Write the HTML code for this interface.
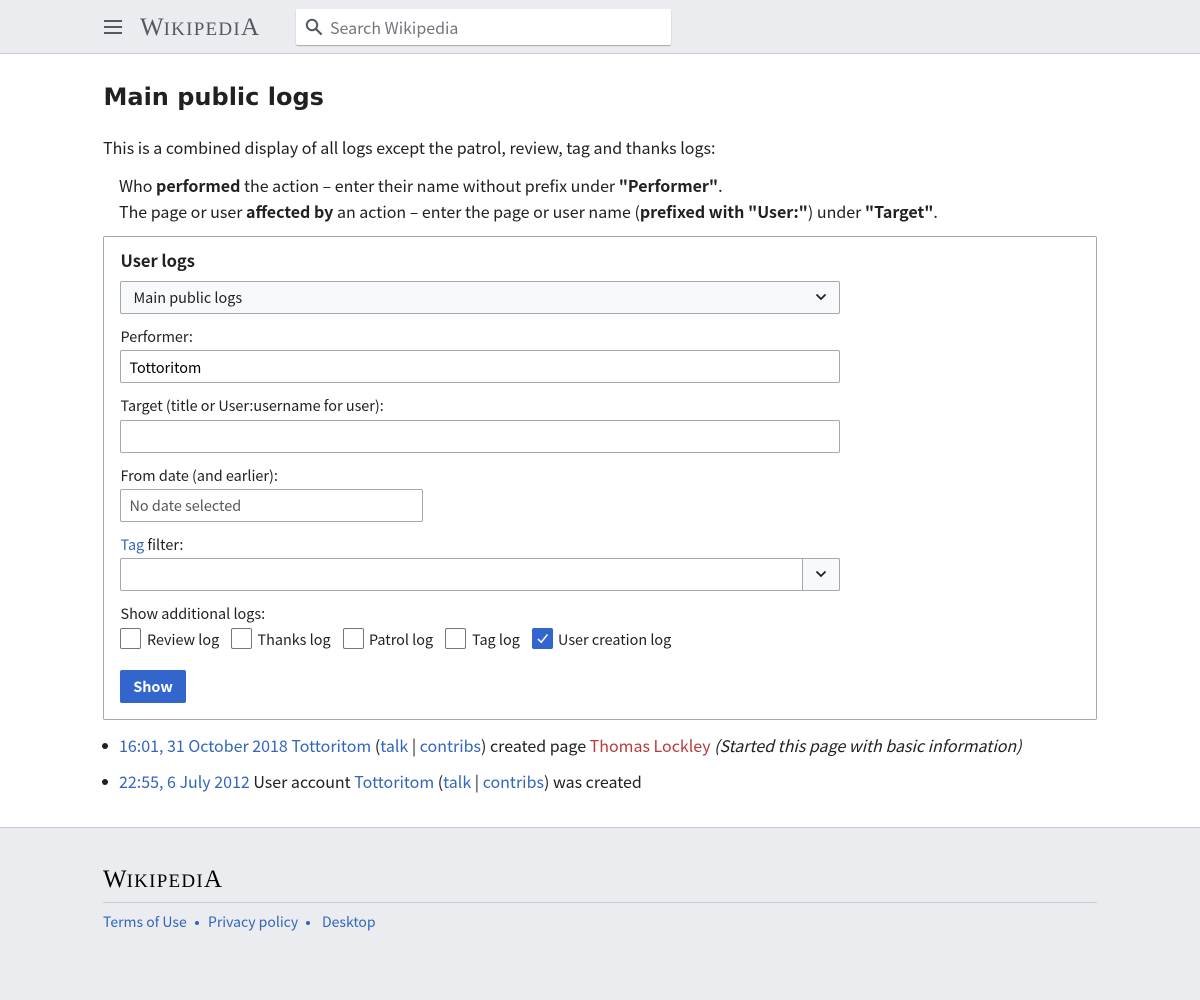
<!DOCTYPE html>
<html><head><meta charset="utf-8"><title>Main public logs</title>
<style>
html,body{margin:0;padding:0;background:#fff}
body{width:1200px;height:1000px;position:relative;overflow:hidden;font-family:"Noto Sans CJK SC","Liberation Sans",sans-serif;color:#202122}
.t{position:absolute;white-space:nowrap;line-height:24px;height:24px}
.b{position:absolute;box-sizing:border-box}
a{color:#3366bb;text-decoration:none}
.f{font-size:14.4px;color:#202122}
.m{font-size:16px}
.in{border:1px solid #a2a9b1;border-radius:2px;background:#fff}
.cb{position:absolute;box-sizing:border-box;width:21px;height:21px;top:628px;border:1px solid #72777d;border-radius:2px;background:#fff}
.wm{font-family:"Liberation Serif",serif;font-size:25px;line-height:28px;height:28px}
.wm span{font-size:19px;letter-spacing:1.25px}
</style></head><body>
<div class="b" style="left:0;top:0;width:1200px;height:54px;background:#eaecf0;border-bottom:1px solid #c8ccd1"></div>
<svg class="b" style="left:103px;top:19px" width="20" height="16" viewBox="0 0 20 16"><path d="M1 2h18M1 8h18M1 14h18" stroke="#54595d" stroke-width="2" fill="none"/></svg>
<div class="t wm" style="left:140px;top:14px;color:#54595d">W<span>IKIPEDI</span>A</div>
<div class="b" style="left:296px;top:9px;width:375px;height:36px;background:#fff;border-radius:2px;box-shadow:0 1px 1px rgba(0,0,0,.3)"></div>
<svg class="b" style="left:305px;top:18px" width="18" height="18" viewBox="0 0 18 18"><circle cx="7" cy="7" r="5.2" stroke="#54595d" stroke-width="2" fill="none"/><path d="M11 11l5.6 5.6" stroke="#54595d" stroke-width="2.2" fill="none"/></svg>
<div class="t m" style="left:330px;top:15px;color:#72777d">Search Wikipedia</div>
<div class="t" style="left:103.5px;top:81px;font-family:'DejaVu Sans',sans-serif;font-weight:700;font-size:24px;line-height:32px;height:32px;color:#202122">Main public logs</div>
<div class="t m" style="left:103px;top:135px">This is a combined display of all logs except the patrol, review, tag and thanks logs:</div>
<div class="t m" style="left:119px;top:173px">Who <b>performed</b> the action – enter their name without prefix under <b>"Performer"</b>.</div>
<div class="t m" style="left:119px;top:199px">The page or user <b>affected by</b> an action – enter the page or user name (<b>prefixed with "User:"</b>) under <b>"Target"</b>.</div>
<div class="b" style="left:103px;top:236px;width:994px;height:484px;border:1px solid #a2a9b1;border-radius:2px"></div>
<div class="t" style="left:120.5px;top:248px;font-size:16.5px;font-weight:700">User logs</div>
<div class="b in" style="left:120px;top:281px;width:720px;height:33px;background:#f8f9fa"></div>
<div class="t f" style="left:133.5px;top:286px">Main public logs</div>
<svg class="b" style="left:815px;top:292px" width="12" height="10" viewBox="0 0 12 10"><path d="M1.5 2.5L6 7l4.5-4.5" stroke="#202122" stroke-width="1.8" fill="none"/></svg>
<div class="t f" style="left:120.5px;top:325px">Performer:</div>
<div class="b in" style="left:120px;top:350px;width:720px;height:33px"></div>
<div class="t f" style="left:129.5px;top:356px;color:#000">Tottoritom</div>
<div class="t f" style="left:120.5px;top:394px">Target (title or User:username for user):</div>
<div class="b in" style="left:120px;top:420px;width:720px;height:33px"></div>
<div class="t f" style="left:120.5px;top:464px">From date (and earlier):</div>
<div class="b in" style="left:120px;top:489px;width:303px;height:33px"></div>
<div class="t f" style="left:129.5px;top:494px;color:#54595d">No date selected</div>
<div class="t f" style="left:120.5px;top:533px"><a href="#">Tag</a> filter:</div>
<div class="b in" style="left:120px;top:558px;width:720px;height:33px"></div>
<div class="b" style="left:802px;top:558px;width:38px;height:33px;background:#f8f9fa;border:1px solid #a2a9b1;border-radius:0 2px 2px 0"></div>
<svg class="b" style="left:815px;top:569px" width="12" height="10" viewBox="0 0 12 10"><path d="M1.5 2.5L6 7l4.5-4.5" stroke="#202122" stroke-width="1.8" fill="none"/></svg>
<div class="t f" style="left:120.5px;top:602px">Show additional logs:</div>
<div class="cb" style="left:120px"></div><div class="t f" style="left:147px;top:628px">Review log</div>
<div class="cb" style="left:231px"></div><div class="t f" style="left:257.5px;top:628px">Thanks log</div>
<div class="cb" style="left:343px"></div><div class="t f" style="left:369px;top:628px">Patrol log</div>
<div class="cb" style="left:445px"></div><div class="t f" style="left:472px;top:628px">Tag log</div>
<div class="cb" style="left:532px;background:#3366cc;border-color:#3366cc"></div>
<svg class="b" style="left:532px;top:628px" width="21" height="21" viewBox="0 0 21 21"><path d="M6 11l3.2 3.2L15.5 6.5" stroke="#fff" stroke-width="1.5" fill="none"/></svg>
<div class="t f" style="left:558px;top:628px">User creation log</div>
<div class="b" style="left:120px;top:670px;width:66px;height:33px;background:#3366cc;border-radius:2px"></div>
<div class="t f" style="left:120px;width:66px;text-align:center;top:675px;color:#fff;font-weight:700">Show</div>
<div class="b" style="left:102px;top:743px;width:6px;height:6px;border-radius:50%;background:#202122"></div>
<div class="t m" style="left:119px;top:733px"><a href="#">16:01, 31 October 2018</a> <a href="#">Tottoritom</a> (<a href="#">talk</a> | <a href="#">contribs</a>) created page <a href="#" style="color:#b83a3a">Thomas Lockley</a> <i>(Started this page with basic information)</i></div>
<div class="b" style="left:102px;top:779px;width:6px;height:6px;border-radius:50%;background:#202122"></div>
<div class="t m" style="left:119px;top:769px"><a href="#">22:55, 6 July 2012</a> User account <a href="#">Tottoritom</a> (<a href="#">talk</a> | <a href="#">contribs</a>) was created</div>
<div class="b" style="left:0;top:827px;width:1200px;height:173px;background:#eaecf0;border-top:1px solid #c8ccd1"></div>
<div class="t wm" style="left:103px;top:866px;color:#000">W<span>IKIPEDI</span>A</div>
<div class="b" style="left:103px;top:902px;width:994px;height:1px;background:#c8ccd1"></div>
<div class="t" style="font-size:14px;left:103px;top:910px"><a href="#">Terms of Use</a></div>
<div class="b" style="left:195px;top:921px;width:4px;height:4px;border-radius:50%;background:#3366bb"></div>
<div class="t" style="font-size:14px;left:208px;top:910px"><a href="#">Privacy policy</a></div>
<div class="b" style="left:306px;top:921px;width:4px;height:4px;border-radius:50%;background:#3366bb"></div>
<div class="t" style="font-size:14px;left:322px;top:910px"><a href="#">Desktop</a></div>
</body></html>
